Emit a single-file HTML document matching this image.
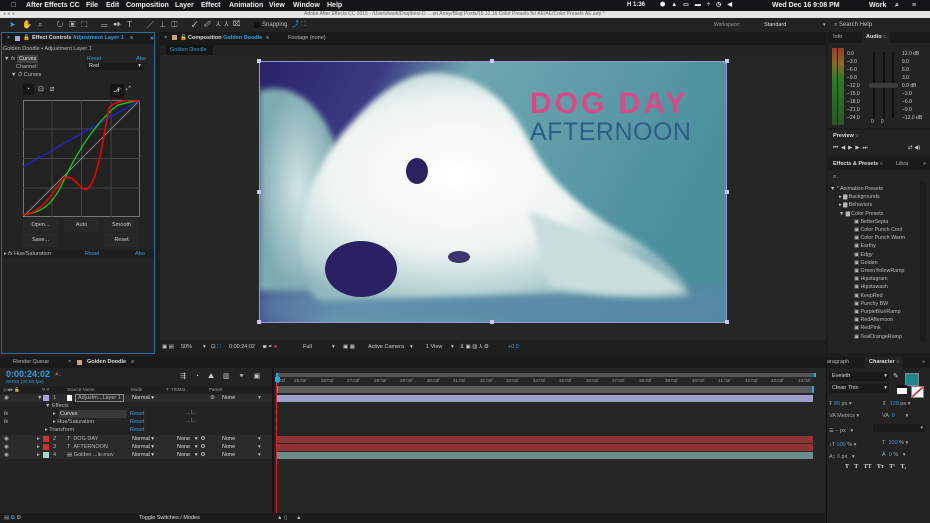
<!DOCTYPE html>
<html><head><meta charset="utf-8"><style>
*{margin:0;padding:0;box-sizing:border-box}
body{width:930px;height:523px;overflow:hidden;background:#1d1d1d;font-family:"Liberation Sans",sans-serif;font-size:6px;color:#b8b8b8;position:relative;white-space:nowrap}
.a{position:absolute}
.blue{color:#2d9fe0}
.w{color:#ddd}
</style></head><body>
<!-- menu bar -->
<div class="a" style="left:0;top:0;width:930px;height:11px;background:#151517;color:#eee;font-size:7px;font-weight:bold;line-height:11px">
<span class="a" style="left:11px">&#63743;</span>
<span class="a" style="left:26px">After Effects CC</span><span class="a" style="left:86px">File</span><span class="a" style="left:106px">Edit</span><span class="a" style="left:126px">Composition</span><span class="a" style="left:175px">Layer</span><span class="a" style="left:201px">Effect</span><span class="a" style="left:229px">Animation</span><span class="a" style="left:269px">View</span><span class="a" style="left:293px">Window</span><span class="a" style="left:327px">Help</span>
<span class="a" style="left:627px;font-size:6px">H 1:36</span>
<span class="a" style="left:660px;font-size:6px;letter-spacing:6px">⬢▲▭▬÷◷◀︎</span>
<span class="a" style="left:772px">Wed Dec 16 9:08 PM</span><span class="a" style="left:869px">Work</span><span class="a" style="left:895px">⌕</span><span class="a" style="left:912px">≡</span>
</div>
<!-- title bar -->
<div class="a" style="left:0;top:11px;width:930px;height:7px;background:#e4e4e4;color:#666;font-size:5px;line-height:7px">
<span class="a" style="left:3px;color:#999">● ● ●</span><span class="a" style="left:304px">Adobe After Effects CC 2015 - /Users/work/Dropbox/-D ... on Array/Blog Posts/15.12.16 Color Presets for AE/AE/Color Presets AE.aep *</span></div>
<!-- toolbar -->
<div class="a" style="left:0;top:18px;width:930px;height:14px;background:#232323;color:#bbb;font-size:8px;line-height:14px">
<span class="a" style="left:9px;color:#3aa0e0">➤</span><span class="a" style="left:22px;letter-spacing:6px">✋⌕ ↻▣⛶ ▭✒T ╱⊥◫ ✓✐</span>
<span class="a" style="left:216px;letter-spacing:4px;font-size:7px">⅄⅄⌧</span>
<span class="a" style="left:254px;width:6px;height:6px;top:4px;background:#111"></span>
<span class="a" style="left:262px;font-size:6px">Snapping</span><span class="a" style="left:292px;color:#3aa0e0;font-size:7px">⤴ ⛶</span>
<span class="a" style="left:714px;font-size:5px;color:#999">Workspace:</span><span class="a" style="left:764px;font-size:5.5px;color:#ddd">Standard</span>
<span class="a" style="left:823px;font-size:5px">▾</span><span class="a" style="left:834px;font-size:6px">⌕ Search Help</span>
</div>
<!-- left panel -->
<div class="a" style="left:1px;top:32px;width:154px;height:322px;border:1px solid #2a6f9e;background:#232323"></div>
<div class="a" style="left:2px;top:33px;width:152px;height:11px;background:#1a1a1a;font-size:5.5px;line-height:11px">
<span class="a" style="left:5px">×</span><span class="a" style="left:13px;width:5px;height:5px;top:3px;background:#aaa8d8"></span><span class="a" style="left:21px">🔓</span>
<span class="a w" style="left:30px;font-weight:bold">Effect Controls <span class="blue">Adjustment Layer 1</span></span><span class="a" style="left:128px">≡</span></div>
<span class="a" style="left:150px;top:33px;font-size:7px;line-height:11px">»</span>
<div class="a" style="left:3px;top:46px;font-size:5.5px">Golden Doodle • Adjustment Layer 1</div>
<div class="a" style="left:3px;top:55px;width:150px;height:8px;font-size:5.5px;line-height:8px"><span class="a" style="left:1px">▼ <i>fx</i></span><span class="a w" style="left:14px;background:#444;padding:0 2px">Curves</span><span class="a blue" style="left:84px">Reset</span><span class="a blue" style="left:133px">Abo</span></div>
<div class="a" style="left:16px;top:64px;font-size:5.5px">Channel:</div>
<div class="a w" style="left:87px;top:63px;width:56px;height:7px;background:#1a1a1a;font-size:5.5px;line-height:7px;padding-left:2px">Red<span style="float:right;padding-right:2px">▾</span></div>
<div class="a" style="left:11px;top:72px;font-size:5.5px">▼ ⏱ Curves</div>
<div class="a" style="left:23px;top:84px;width:11px;height:11px;background:#151515;color:#ddd;font-size:5px;text-align:center;line-height:11px">▪</div>
<div class="a" style="left:38px;top:84px;width:28px;height:11px;color:#ccc;font-size:7px;line-height:11px;letter-spacing:6px">⊡⧄</div>
<div class="a" style="left:110px;top:84px;width:14px;height:14px;background:#151515;color:#ddd;font-size:7px;text-align:center;line-height:14px">𝓝</div>
<div class="a" style="left:126px;top:86px;color:#ccc;font-size:6px">⤢</div>
<svg class="a" style="left:23px;top:100px" width="117" height="117" viewBox="0 0 117 117">
<rect x="0.5" y="0.5" width="116" height="116" fill="#222" stroke="#777"/>
<g stroke="#444" stroke-width="1"><line x1="29" y1="0" x2="29" y2="117"/><line x1="58.5" y1="0" x2="58.5" y2="117"/><line x1="88" y1="0" x2="88" y2="117"/><line x1="0" y1="29" x2="117" y2="29"/><line x1="0" y1="58.5" x2="117" y2="58.5"/><line x1="0" y1="88" x2="117" y2="88"/></g>
<line x1="0" y1="117" x2="117" y2="0" stroke="#999" stroke-width="0.8"/>
<polyline points="0,67 117,0" fill="none" stroke="#22f" stroke-width="1"/>
<path d="M0,115 C20,112 30,105 42,78 C55,50 75,20 95,5 L117,0" fill="none" stroke="#1c1" stroke-width="1.3"/>
<path d="M0,115 C25,112 35,80 42,78 C50,73 58,92 64,89 C74,84 80,40 86,8 C92,0 105,0 117,1" fill="none" stroke="#e00" stroke-width="1.6"/>
</svg>
<div class="a" style="left:23px;top:218px;width:117px;height:14px;font-size:5.5px;color:#ccc;line-height:14px"><span class="a" style="left:0;width:35px;background:#282828;text-align:center">Open...</span><span class="a" style="left:41px;width:35px;background:#282828;text-align:center">Auto</span><span class="a" style="left:81px;width:35px;background:#282828;text-align:center">Smooth</span></div>
<div class="a" style="left:23px;top:233px;width:117px;height:14px;font-size:5.5px;color:#ccc;line-height:14px"><span class="a" style="left:0;width:35px;background:#282828;text-align:center">Save...</span><span class="a" style="left:81px;width:35px;background:#282828;text-align:center">Reset</span></div>
<div class="a" style="left:2px;top:250px;width:152px;height:8px;background:#1e1e1e;font-size:5.5px;line-height:8px"><span class="a" style="left:2px">▸ <i>fx</i> Hue/Saturation</span><span class="a blue" style="left:83px">Reset</span><span class="a blue" style="left:133px">Abo</span></div>
<!-- comp panel -->
<div class="a" style="left:160px;top:32px;width:666px;height:13px;background:#1a1a1a;font-size:5.5px;line-height:12px">
<span class="a" style="left:4px">×</span><span class="a" style="left:12px;width:5px;height:5px;top:3px;background:#c9a56a"></span><span class="a" style="left:20px">🔓</span>
<span class="a w" style="left:28px;font-weight:bold">Composition <span class="blue">Golden Doodle</span></span><span class="a" style="left:106px">≡</span><span class="a" style="left:128px">Footage (none)</span></div>
<div class="a" style="left:160px;top:45px;width:666px;height:10px;background:#232323"></div>
<div class="a blue" style="left:166px;top:45px;width:47px;height:10px;background:#151515;font-size:5.5px;line-height:10px;padding-left:4px">Golden Doodle</div>
<div class="a" style="left:160px;top:55px;width:666px;height:285px;background:#262626"></div>
<!-- image -->
<svg class="a" style="left:259px;top:61px" width="468" height="262" viewBox="0 0 468 262">
<defs>
<linearGradient id="bg" x1="0" y1="0" x2="1" y2="0.3"><stop offset="0" stop-color="#2a226a"/><stop offset="0.25" stop-color="#3a3a82"/><stop offset="0.42" stop-color="#6fa7b2"/><stop offset="1" stop-color="#4a8e9c"/></linearGradient>
<radialGradient id="fur" cx="0.4" cy="0.45" r="0.6"><stop offset="0" stop-color="#ffffff"/><stop offset="0.55" stop-color="#eef4f2"/><stop offset="0.85" stop-color="#b7d3d4"/><stop offset="1" stop-color="#8fb7bd"/></radialGradient>
<radialGradient id="fur2" cx="0.5" cy="0.5" r="0.5"><stop offset="0" stop-color="#d4e6e6"/><stop offset="1" stop-color="#7eaab2"/></radialGradient>
<filter id="bl"><feGaussianBlur stdDeviation="3"/></filter>
<filter id="bl2"><feGaussianBlur stdDeviation="8"/></filter>
</defs>
<rect width="468" height="262" fill="url(#bg)"/>
<rect y="225" width="468" height="37" fill="#5d86ab" opacity="0.7" filter="url(#bl2)"/>
<path d="M0,30 C30,20 60,40 75,80 C85,130 70,200 60,230 L0,230Z" fill="url(#fur2)" filter="url(#bl)"/>
<path d="M90,65 C120,30 150,10 180,12 C220,15 250,40 270,80 C290,120 320,145 360,170 C400,190 430,220 430,235 C400,240 340,236 300,232 L60,240 C35,220 35,150 60,110 C70,90 80,75 90,65Z" fill="url(#fur)" filter="url(#bl)"/>
<path d="M270,150 C320,170 380,190 425,230 C380,238 320,232 290,225Z" fill="#c9dddd" filter="url(#bl)"/>
<ellipse cx="158" cy="110" rx="11" ry="13" fill="#2a2360"/>
<ellipse cx="102" cy="208" rx="36" ry="28" fill="#2b2063"/>
<ellipse cx="200" cy="196" rx="11" ry="6" fill="#3a3470"/>
<text x="271" y="52" font-family="Liberation Sans,sans-serif" font-weight="bold" font-size="30" fill="#d94a8c" letter-spacing="3">DOG DAY</text>
<text x="271" y="79" font-family="Liberation Sans,sans-serif" font-size="25" fill="#2c5f86" letter-spacing="0.5">AFTERNOON</text>
</svg>
<div class="a" style="left:259px;top:61px;width:468px;height:262px;border:1px solid #9a9ad0"></div>
<div class="a" style="left:257px;top:59px;width:4px;height:4px;background:#c8c8f0"></div><div class="a" style="left:490px;top:59px;width:4px;height:4px;background:#c8c8f0"></div><div class="a" style="left:725px;top:59px;width:4px;height:4px;background:#c8c8f0"></div>
<div class="a" style="left:257px;top:190px;width:4px;height:4px;background:#c8c8f0"></div><div class="a" style="left:725px;top:190px;width:4px;height:4px;background:#c8c8f0"></div>
<div class="a" style="left:257px;top:320px;width:4px;height:4px;background:#c8c8f0"></div><div class="a" style="left:490px;top:320px;width:4px;height:4px;background:#c8c8f0"></div><div class="a" style="left:725px;top:320px;width:4px;height:4px;background:#c8c8f0"></div>
<div class="a" style="left:160px;top:340px;width:666px;height:15px;background:#1f1f1f;font-size:5.5px;line-height:15px;color:#ccc">
<span class="a" style="left:2px">▣ ▤</span><span class="a" style="left:21px">50%</span><span class="a" style="left:43px">▾</span><span class="a" style="left:51px">⊡ <span class="blue">⛶</span></span><span class="a" style="left:69px">0:00:24:02</span><span class="a" style="left:103px">◙ ⚭ <span style="color:#d44">●</span></span><span class="a" style="left:143px">Full</span><span class="a" style="left:172px">▾</span><span class="a" style="left:183px">▣ ▦</span><span class="a" style="left:208px">Active Camera</span><span class="a" style="left:250px">▾</span><span class="a" style="left:266px">1 View</span><span class="a" style="left:291px">▾</span><span class="a" style="left:300px">⊻ ▣ ▥ ⅄ ⚙</span><span class="a blue" style="left:348px">+0.0</span></div>
<!-- right column -->
<div class="a" style="left:828px;top:32px;width:102px;height:96px;background:#232323"></div>
<div class="a" style="left:828px;top:32px;width:102px;height:11px;background:#1a1a1a;font-size:5.5px;line-height:11px"><span class="a" style="left:5px">Info</span><span class="a w" style="left:34px;font-weight:bold;background:#232323;padding:0 4px">Audio <span style="color:#777">≡</span></span></div>
<div class="a" style="left:832px;top:48px;width:12px;height:77px;background:linear-gradient(#9a3a2a,#8a6a2a 20%,#2f7a2a 40%,#2a5a22)"></div>
<div class="a" style="left:837px;top:48px;width:1px;height:77px;background:#222"></div>
<div class="a" style="left:847px;top:50px;font-size:5px;line-height:8px;color:#ccc">0.0<br>−3.0<br>−6.0<br>−9.0<br>−12.0<br>−15.0<br>−18.0<br>−21.0<br>−24.0</div>
<div class="a" style="left:873px;top:52px;width:2px;height:66px;background:#111"></div><div class="a" style="left:883px;top:52px;width:2px;height:66px;background:#111"></div><div class="a" style="left:892px;top:52px;width:2px;height:66px;background:#111"></div>
<div class="a" style="left:869px;top:83px;width:29px;height:5px;background:#3a3a3a;border-radius:2px"></div>
<div class="a" style="left:871px;top:119px;font-size:5px">0 &nbsp;&nbsp;&nbsp;&nbsp;0</div>
<div class="a" style="left:902px;top:50px;font-size:5px;line-height:8px;color:#ccc">12.0 dB<br>9.0<br>6.0<br>3.0<br>0.0 dB<br>−3.0<br>−6.0<br>−9.0<br>−12.0 dB</div>
<div class="a" style="left:828px;top:130px;width:102px;height:26px;background:#232323;font-size:5.5px"><span class="a w" style="left:5px;top:3px;font-weight:bold">Preview <span style="color:#777">≡</span></span><span class="a" style="left:5px;top:15px;color:#ccc;letter-spacing:3px">⏮◀︎▶︎▶︎⏭</span><span class="a" style="left:80px;top:15px;color:#ccc">⇄ ◀)</span></div>
<div class="a" style="left:828px;top:159px;width:102px;height:194px;background:#232323"></div>
<div class="a" style="left:828px;top:159px;width:102px;height:11px;background:#1a1a1a;font-size:5.5px;line-height:11px"><span class="a w" style="left:5px;font-weight:bold">Effects &amp; Presets <span style="color:#777">≡</span></span><span class="a" style="left:68px">Libra</span><span class="a" style="left:95px">»</span></div>
<div class="a" style="left:833px;top:174px;font-size:6px">⌕.</div>
<div class="a" style="left:830px;top:185px;font-size:5.3px;line-height:8.2px;color:#bbb;width:90px">
<div>▼ * Animation Presets</div>
<div style="padding-left:9px">▸ ▆ Backgrounds</div>
<div style="padding-left:9px">▸ ▆ Behaviors</div>
<div style="padding-left:9px">▼ ▆ Color Presets</div>
<div style="padding-left:24px">▣ BetterSepia</div><div style="padding-left:24px">▣ Color Punch Cool</div><div style="padding-left:24px">▣ Color Punch Warm</div><div style="padding-left:24px">▣ Earthy</div><div style="padding-left:24px">▣ Edgy</div><div style="padding-left:24px">▣ Golden</div><div style="padding-left:24px">▣ GreenYellowRamp</div><div style="padding-left:24px">▣ Hipstagram</div><div style="padding-left:24px">▣ Hipstawash</div><div style="padding-left:24px">▣ KeepRed</div><div style="padding-left:24px">▣ Punchy BW</div><div style="padding-left:24px">▣ PurpleBlueRamp</div><div style="padding-left:24px">▣ RedAfternoon</div><div style="padding-left:24px">▣ RedPink</div><div style="padding-left:24px">▣ TealOrangeRamp</div>
</div>
<div class="a" style="left:920px;top:182px;width:6px;height:160px;background:#1c1c1c"></div>
<!-- timeline -->
<div class="a" style="left:0;top:357px;width:825px;height:11px;background:#1a1a1a;font-size:5.5px;line-height:11px"><span class="a" style="left:13px">Render Queue</span><span class="a" style="left:68px">×</span><span class="a" style="left:77px;width:5px;height:5px;top:3px;background:#c9a56a"></span><span class="a w" style="left:87px;font-weight:bold">Golden Doodle</span><span class="a" style="left:131px">≡</span></div>
<div class="a" style="left:0;top:368px;width:825px;height:145px;background:#232323"></div>
<div class="a blue" style="left:6px;top:369px;font-size:9px;font-weight:bold">0:00:24:02</div>
<div class="a blue" style="left:6px;top:380px;font-size:4.8px">00722 (30.00 fps)</div>
<div class="a" style="left:55px;top:371px;font-size:7px">⌕.</div>
<div class="a" style="left:180px;top:372px;font-size:7px;color:#ccc;letter-spacing:9px">⇶◔⛰▥⚭▣</div>
<div class="a" style="left:0;top:386px;width:272px;height:8px;background:#1f1f1f;font-size:4.5px;line-height:8px;color:#999"><span class="a" style="left:3px">◎◀︎● 🔒</span><span class="a" style="left:42px">⚲ #</span><span class="a" style="left:67px">Source Name</span><span class="a" style="left:131px">Mode</span><span class="a" style="left:166px">T &nbsp;TrkMat</span><span class="a" style="left:209px">Parent</span></div>
<div class="a" style="left:0;top:394px;width:272px;font-size:5.5px;line-height:8.2px">
<div class="a" style="top:0;width:272px;height:8px;background:#2c2c2c"><span class="a" style="left:4px">◉</span><span class="a" style="left:37px">▼</span><span class="a" style="left:43px;top:1px;width:6px;height:6px;background:#aaa8d8"></span><span class="a" style="left:53px">1</span><span class="a" style="left:67px;top:1px;width:5px;height:6px;background:#fff"></span><span class="a" style="left:75px;border:1px solid #888;line-height:6px;padding:0 2px">Adjustm...Layer 1</span><span class="a w" style="left:132px">Normal ▾</span><span class="a" style="left:210px">⚙</span><span class="a w" style="left:222px">None</span><span class="a" style="left:258px">▾</span></div>
<div class="a" style="top:8px;left:45px">▼ Effects</div>
<div class="a" style="top:16px;left:0;width:128px;height:8px"><span class="a" style="left:4px"><i>fx</i></span><span class="a" style="left:53px">▸</span><span class="a w" style="left:59px;width:68px;background:#3a3a3a;padding-left:1px">Curves</span></div>
<div class="a" style="top:24px;left:4px"><i>fx</i></div><div class="a" style="top:24px;left:53px">▸ Hue/Saturation</div>
<div class="a" style="top:32px;left:45px">▸ Transform</div>
<div class="a blue" style="top:16px;left:130px">Reset</div><div class="a blue" style="top:24px;left:130px">Reset</div><div class="a blue" style="top:32px;left:130px">Reset</div>
<div class="a blue" style="top:15px;left:186px">...I...</div><div class="a blue" style="top:23px;left:186px">...I...</div>
</div>
<div class="a" style="left:0;top:435px;width:272px;font-size:5.5px;line-height:8px">
<div class="a" style="top:0;width:272px;height:8px;background:#2a2a2a"><span class="a" style="left:4px">◉</span><span class="a" style="left:37px">▸</span><span class="a" style="left:43px;top:1px;width:6px;height:6px;background:#c33"></span><span class="a" style="left:53px">2</span><span class="a" style="left:67px">T &nbsp;DOG DAY</span><span class="a w" style="left:132px">Normal ▾</span><span class="a w" style="left:177px">None &nbsp;&nbsp;▾ &nbsp;⚙</span><span class="a w" style="left:222px">None</span><span class="a" style="left:258px">▾</span></div>
<div class="a" style="top:8px;width:272px;height:8px;background:#2a2a2a"><span class="a" style="left:4px">◉</span><span class="a" style="left:37px">▸</span><span class="a" style="left:43px;top:1px;width:6px;height:6px;background:#c33"></span><span class="a" style="left:53px">3</span><span class="a" style="left:67px">T &nbsp;AFTERNOON</span><span class="a w" style="left:132px">Normal ▾</span><span class="a w" style="left:177px">None &nbsp;&nbsp;▾ &nbsp;⚙</span><span class="a w" style="left:222px">None</span><span class="a" style="left:258px">▾</span></div>
<div class="a" style="top:16px;width:272px;height:8px;background:#2a2a2a"><span class="a" style="left:4px">◉</span><span class="a" style="left:37px">▸</span><span class="a" style="left:43px;top:1px;width:6px;height:6px;background:#a8d8d0"></span><span class="a" style="left:53px">4</span><span class="a" style="left:67px">▤ Golden ...le.mov</span><span class="a w" style="left:132px">Normal ▾</span><span class="a w" style="left:177px">None &nbsp;&nbsp;▾ &nbsp;⚙</span><span class="a w" style="left:222px">None</span><span class="a" style="left:258px">▾</span></div>
</div>
<div class="a" style="left:272px;top:368px;width:2px;height:145px;background:#151515"></div>
<div class="a" style="left:274px;top:368px;width:551px;height:145px;background:#262626"></div>
<div class="a" style="left:276px;top:373px;width:540px;height:4px;background:#555;border-left:2px solid #2ad;border-right:2px solid #2ad"></div>
<div class="a" style="left:276px;top:377px;width:540px;height:8px;font-size:4.5px;color:#999;line-height:8px">
<span class="a" style="left:3px">02f</span><span class="a" style="left:18px">25:02f</span><span class="a" style="left:45px">26:02f</span><span class="a" style="left:71px">27:02f</span><span class="a" style="left:98px">28:02f</span><span class="a" style="left:124px">29:02f</span><span class="a" style="left:151px">30:02f</span><span class="a" style="left:177px">31:02f</span><span class="a" style="left:204px">32:02f</span><span class="a" style="left:230px">33:02f</span><span class="a" style="left:257px">34:02f</span><span class="a" style="left:283px">35:02f</span><span class="a" style="left:310px">36:02f</span><span class="a" style="left:336px">37:02f</span><span class="a" style="left:363px">38:02f</span><span class="a" style="left:389px">39:02f</span><span class="a" style="left:416px">40:02f</span><span class="a" style="left:442px">41:02f</span><span class="a" style="left:469px">42:02f</span><span class="a" style="left:495px">43:02f</span><span class="a" style="left:522px">44:02f</span></div>
<div class="a" style="left:276px;top:386px;width:538px;height:7px;background:#5a5a5a;border-left:2px solid #2ad;border-right:2px solid #2ad"></div>
<div class="a" style="left:277px;top:395px;width:536px;height:7px;background:#9e9cc8"></div>
<div class="a" style="left:277px;top:436px;width:536px;height:7px;background:#8e3434"></div>
<div class="a" style="left:277px;top:444px;width:536px;height:7px;background:#8e3434"></div>
<div class="a" style="left:277px;top:452px;width:536px;height:7px;background:#6e8c88"></div>
<div class="a" style="left:275px;top:377px;width:5px;height:6px;background:#2ad;border-radius:0 0 3px 3px"></div>
<div class="a" style="left:276px;top:383px;width:1px;height:130px;background:#d22"></div>
<div class="a" style="left:276px;top:410px;font-size:6px;color:#d44;line-height:8px">I<br>I<br>I</div>
<div class="a" style="left:0;top:513px;width:825px;height:10px;background:#1c1c1c;font-size:5.5px;line-height:10px"><span class="a" style="left:4px;color:#aaa">▤ <span class="blue">⧉</span> ⚙</span><span class="a w" style="left:139px">Toggle Switches / Modes</span><span class="a" style="left:277px">▲ ▯ &nbsp;&nbsp;&nbsp;&nbsp;&nbsp;▲</span></div>
<!-- character panel -->
<div class="a" style="left:825px;top:357px;width:105px;height:166px;background:#232323"></div>
<div class="a" style="left:825px;top:357px;width:105px;height:11px;background:#1a1a1a;font-size:5.5px;line-height:11px"><span class="a" style="left:2px">aragraph</span><span class="a w" style="left:40px;font-weight:bold;background:#232323;padding:0 4px">Character <span style="color:#777">≡</span></span><span class="a" style="left:97px">»</span></div>
<div class="a w" style="left:829px;top:372px;width:60px;height:9px;background:#1a1a1a;font-size:5.5px;line-height:9px;padding-left:3px">Eveleth<span style="float:right;padding-right:2px">▾</span></div>
<div class="a w" style="left:829px;top:384px;width:60px;height:9px;background:#1a1a1a;font-size:5.5px;line-height:9px;padding-left:3px">Clean Thin<span style="float:right;padding-right:2px">▾</span></div>
<div class="a" style="left:893px;top:372px;color:#ccc;font-size:7px">✎</div>
<div class="a" style="left:905px;top:373px;width:14px;height:13px;background:#1c8a8a;border:1px solid #888"></div>
<div class="a" style="left:897px;top:385px;width:10px;height:9px;background:#fff;border-top:3px solid #111"></div>
<div class="a" style="left:911px;top:386px;width:13px;height:12px;background:#fff;border:1px solid #888"><svg width="11" height="10"><line x1="0" y1="10" x2="11" y2="0" stroke="#d22" stroke-width="1.5"/></svg></div>
<div class="a" style="left:829px;top:398px;font-size:5.5px;line-height:12px;color:#aaa">
<div>Ŧ <span class="blue">95</span> px ▾</div><div>VA Metrics ▾</div><div style="margin-top:3px">☰ <span class="blue">–</span> px &nbsp;&nbsp;▾</div><div style="margin-top:2px">↕T <span class="blue">100</span> % ▾</div><div>A↕ <span class="blue">0</span> px &nbsp;&nbsp;▾</div></div>
<div class="a" style="left:882px;top:398px;font-size:5.5px;line-height:12px;color:#aaa"><div>⇕ &nbsp;<span class="blue">120</span> px ▾</div><div>VA &nbsp;<span class="blue">0</span> &nbsp;&nbsp;&nbsp;&nbsp;&nbsp;&nbsp;▾</div></div>
<div class="a" style="left:873px;top:424px;width:52px;height:8px;background:#1a1a1a;font-size:5px;text-align:right;padding-right:2px;line-height:8px">▾</div>
<div class="a" style="left:882px;top:437px;font-size:5.5px;line-height:12px;color:#aaa"><div>T &nbsp;<span class="blue">100</span> % ▾</div><div>Ā &nbsp;<span class="blue">0</span> % &nbsp;&nbsp;▾</div></div>
<div class="a w" style="left:845px;top:464px;font-size:6px;font-weight:bold;font-family:'Liberation Serif',serif;word-spacing:4px">T T TT Tт T¹ T₁</div>
<div class="a" style="left:826px;top:357px;width:1px;height:166px;background:#111"></div>
</body></html>
